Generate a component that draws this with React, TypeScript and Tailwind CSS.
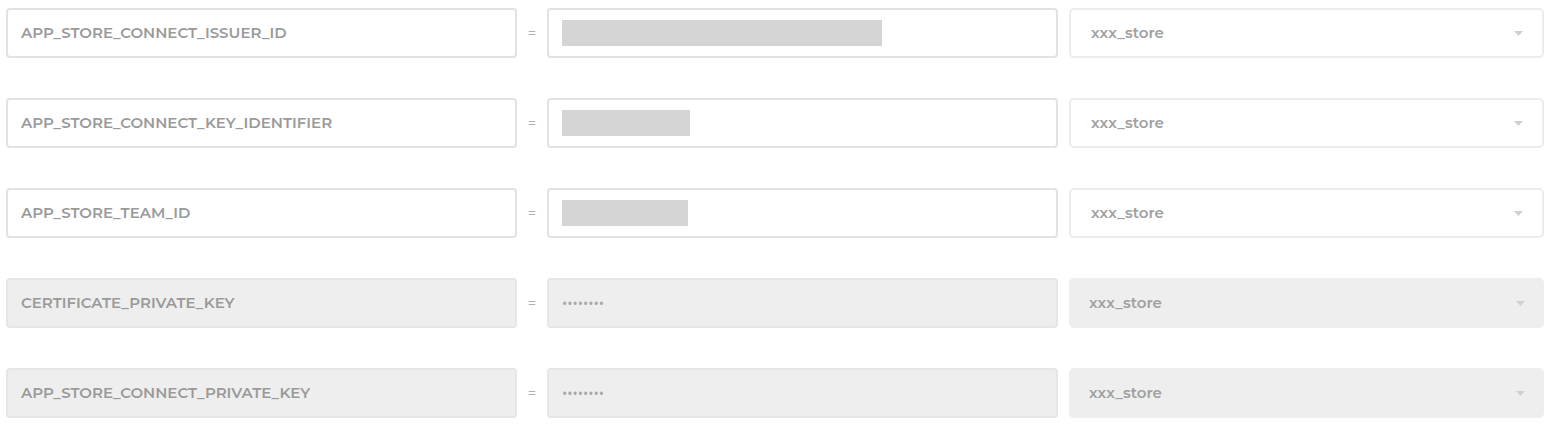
import { useState } from "react";

type EnvRow = {
  name: string;
  value?: number; // placeholder width when visible
  masked?: boolean;
  store: string;
};

const rows: EnvRow[] = [
  { name: "APP_STORE_CONNECT_ISSUER_ID", value: 320, store: "xxx_store" },
  { name: "APP_STORE_CONNECT_KEY_IDENTIFIER", value: 128, store: "xxx_store" },
  { name: "APP_STORE_TEAM_ID", value: 126, store: "xxx_store" },
  { name: "CERTIFICATE_PRIVATE_KEY", masked: true, store: "xxx_store" },
  { name: "APP_STORE_CONNECT_PRIVATE_KEY", masked: true, store: "xxx_store" },
];

function Caret() {
  return (
    <svg width="9" height="5" viewBox="0 0 9 5" className="shrink-0">
      <path d="M0 0h9L4.5 5z" fill="#d0d0d0" />
    </svg>
  );
}

function Row({ row }: { row: EnvRow }) {
  const locked = !!row.masked;
  const box = locked
    ? "bg-[#eeeeee] border-[#e6e6e6]"
    : "bg-white border-[#e2e2e2]";

  return (
    <div className="flex items-center h-[50px]">
      {/* key */}
      <div
        className={`w-[511px] h-full shrink-0 flex items-center px-[13px] border-2 rounded-[4px] ${box}`}
      >
        <span className="text-[15px] font-semibold text-[#9a9a9a]">
          {row.name}
        </span>
      </div>

      <div className="w-[30px] shrink-0 flex justify-center text-[14px] text-[#b0b0b0] pb-[2px] font-['Open_Sans',sans-serif]">
        =
      </div>

      {/* value */}
      <div
        className={`w-[511px] h-full shrink-0 flex items-center px-[13px] border-2 rounded-[4px] ${box}`}
      >
        {locked ? (
          <span className="text-[14px] text-[#a8a8a8] font-['Open_Sans',sans-serif]">
            ••••••••
          </span>
        ) : (
          <div
            className="h-[26px] bg-[#d5d5d5]"
            style={{ width: row.value }}
          />
        )}
      </div>

      {/* store select */}
      <div
        className={`ml-[11px] flex-1 h-full flex items-center justify-between pl-[20px] pr-[19px] rounded-[5px] ${
          locked ? "bg-[#eeeeee]" : "bg-white border-2 border-[#ececec]"
        }`}
      >
        <span className="text-[15px] font-semibold text-[#a0a0a0]">
          {row.store}
        </span>
        <Caret />
      </div>
    </div>
  );
}

export default function App() {
  const [items] = useState(rows);

  return (
    <div
      className="w-[1552px] h-[429px] bg-white pt-[8px] pl-[6px] pr-[8px] flex flex-col gap-[40px]"
      style={{ fontFamily: "Montserrat, 'Open Sans', Lato, sans-serif" }}
    >
      {items.map((r) => (
        <Row key={r.name} row={r} />
      ))}
    </div>
  );
}
